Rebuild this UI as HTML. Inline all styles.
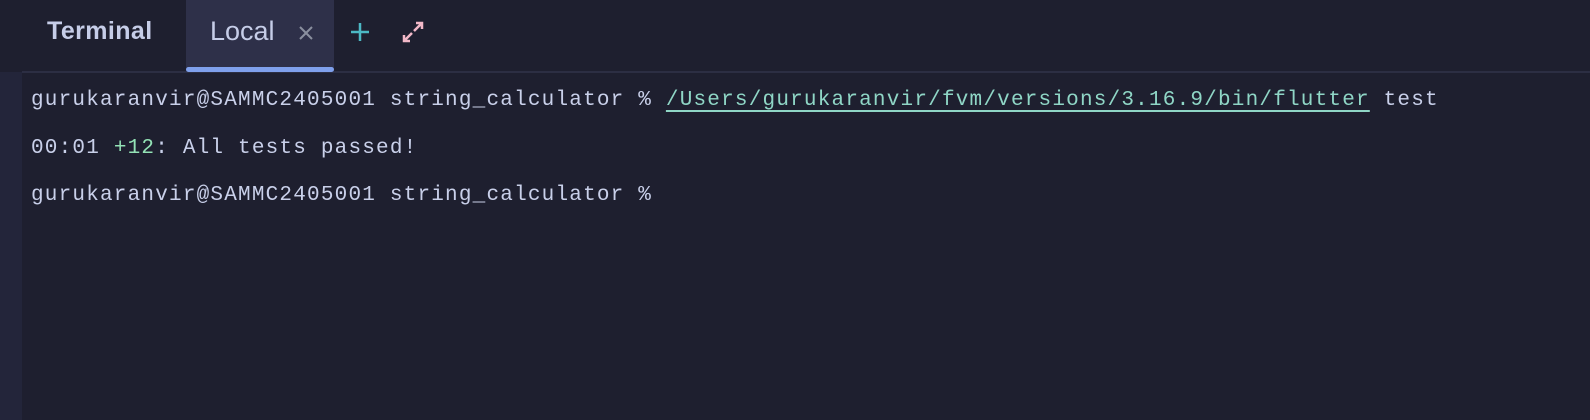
<!DOCTYPE html>
<html><head><style>
body{margin:0;width:1590px;height:420px;background:#1e1f2f;overflow:hidden;position:relative;font-family:"Liberation Sans",sans-serif}
.left{position:absolute;left:0;top:72px;width:22px;height:348px;background:#23253a}
.sep{position:absolute;left:22px;right:0;top:71px;height:2px;background:#2c2e43}
.tab{position:absolute;left:186px;top:0;width:148px;height:72px;background:#2e3049}
.ul{position:absolute;left:186px;top:67px;width:148px;height:5px;background:#7fa0ec;border-radius:3px}
.t1{position:absolute;left:47px;top:17px;font-size:25px;font-weight:bold;color:#c6cde8;letter-spacing:0.4px}
.t2{position:absolute;left:210px;top:16px;font-size:27px;color:#c6cde8}
.term{position:absolute;left:31px;top:77px;font-family:"Liberation Mono",monospace;font-size:21px;letter-spacing:1.2px;color:#c9d0ea;line-height:47.5px;white-space:pre}
.lk{color:#8fd6c6;text-decoration:underline;text-underline-offset:5px;text-decoration-thickness:2px}
.g{color:#93e2b5}
</style></head><body>
<div class="left"></div>
<div class="sep"></div>
<div class="tab"></div>
<div class="ul"></div>
<div class="t1">Terminal</div>
<div class="t2">Local</div>
<svg style="position:absolute;left:298px;top:25px" width="16" height="16"><path d="M2 2L14 14M14 2L2 14" stroke="#8a8f9e" stroke-width="2"/></svg>
<svg style="position:absolute;left:350px;top:22px" width="20" height="20"><path d="M10 1V19M1 10H19" stroke="#4cb8c4" stroke-width="2.5"/></svg>
<svg style="position:absolute;left:400px;top:19px" width="26" height="26"><path d="M14 12L22 4M16 4H22V10M12 14L4 22M4 16V22H10" stroke="#f2b8c8" stroke-width="2.5" fill="none"/></svg>
<div class="term">gurukaranvir@SAMMC2405001 string_calculator % <span class="lk">/Users/gurukaranvir/fvm/versions/3.16.9/bin/flutter</span> test
00:01 <span class="g">+12</span>: All tests passed!
gurukaranvir@SAMMC2405001 string_calculator %</div>
</body></html>
